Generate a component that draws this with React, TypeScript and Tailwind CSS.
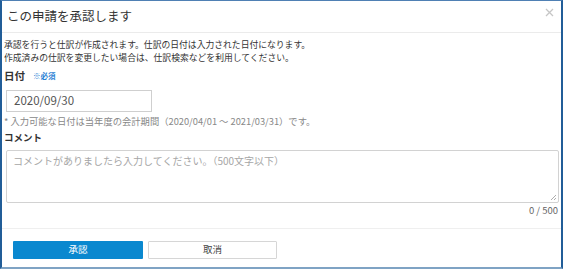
import React from 'react';

const font = { fontFamily: '"Noto Sans CJK JP", "Noto Sans", sans-serif' };

export default function App() {
  return (
    <div
      className="w-[563px] h-[269px] bg-white border-l-2 border-r-2 border-t border-b-[2px] border-l-[#215d98] border-r-[#215d98] border-t-[#4f80b4] border-b-[#7fa3c4] flex flex-col overflow-hidden"
      style={font}
    >
      <div className="h-[32px] shrink-0 flex items-center justify-between pl-[5px] pr-[7px] border-b border-[#ebebeb]">
        <h1 className="text-[12.5px] text-[#333] leading-none">この申請を承認します</h1>
        <svg className="self-start mt-[7px]" width="9" height="9" viewBox="0 0 9 9">
          <path d="M1 1 L8 8 M8 1 L1 8" stroke="#c6c6c6" strokeWidth="1.3" />
        </svg>
      </div>

      <div className="flex flex-col px-[2px] pt-[5px] text-[#333]">
        <p className="text-[8.8px] leading-[13px]">
          承認を行うと仕訳が作成されます。仕訳の日付は入力された日付になります。
          <br />
          作成済みの仕訳を変更したい場合は、仕訳検索などを利用してください。
        </p>

        <div className="mt-[5px] h-[14px] flex items-center gap-[8px]">
          <span className="text-[10.5px] font-bold leading-[14px]">日付</span>
          <span className="text-[7.5px] font-bold text-[#2a7fd4] leading-[14px]">※必須</span>
        </div>

        <div className="mt-[7px] ml-[2px] w-[146px] h-[22px] border border-[#cfcfcf] flex items-center px-[7px] text-[11.5px] text-[#555]">
          2020/09/30
        </div>

        <p className="mt-[2px] text-[9.3px] leading-[14px] text-[#888]">
          * 入力可能な日付は当年度の会計期間（2020/04/01 ～ 2021/03/31）です。
        </p>

        <div className="mt-[2px] text-[9.5px] font-bold leading-[14px]">コメント</div>

        <div className="relative mt-[6px] ml-[2px] h-[53px] border border-[#d2d2d2] rounded-[2px] px-[6px] pt-[3px] text-[10px] leading-[14px] text-[#a6a6a6]">
          コメントがありましたら入力してください。（500文字以下）
          <svg className="absolute right-[1px] bottom-[1px]" width="7" height="7" viewBox="0 0 7 7">
            <path d="M6 1 L1 6 M6 4 L4 6" stroke="#999" strokeWidth="0.8" fill="none" />
          </svg>
        </div>

        <div className="text-right text-[9.5px] leading-[14px] text-[#666] pr-[1px]">0 / 500</div>
      </div>

      <div className="mt-[11px] border-t border-[#efefef] flex gap-[5px] pl-[11px] pt-[12px]">
        <button className="w-[130px] h-[18px] bg-[#0a88cf] text-white text-[9.5px] leading-none rounded-[1px]">
          承認
        </button>
        <button className="w-[129px] h-[18px] bg-white border border-[#d6d6d6] text-[#444] text-[9.5px] leading-none rounded-[1px]">
          取消
        </button>
      </div>
    </div>
  );
}
